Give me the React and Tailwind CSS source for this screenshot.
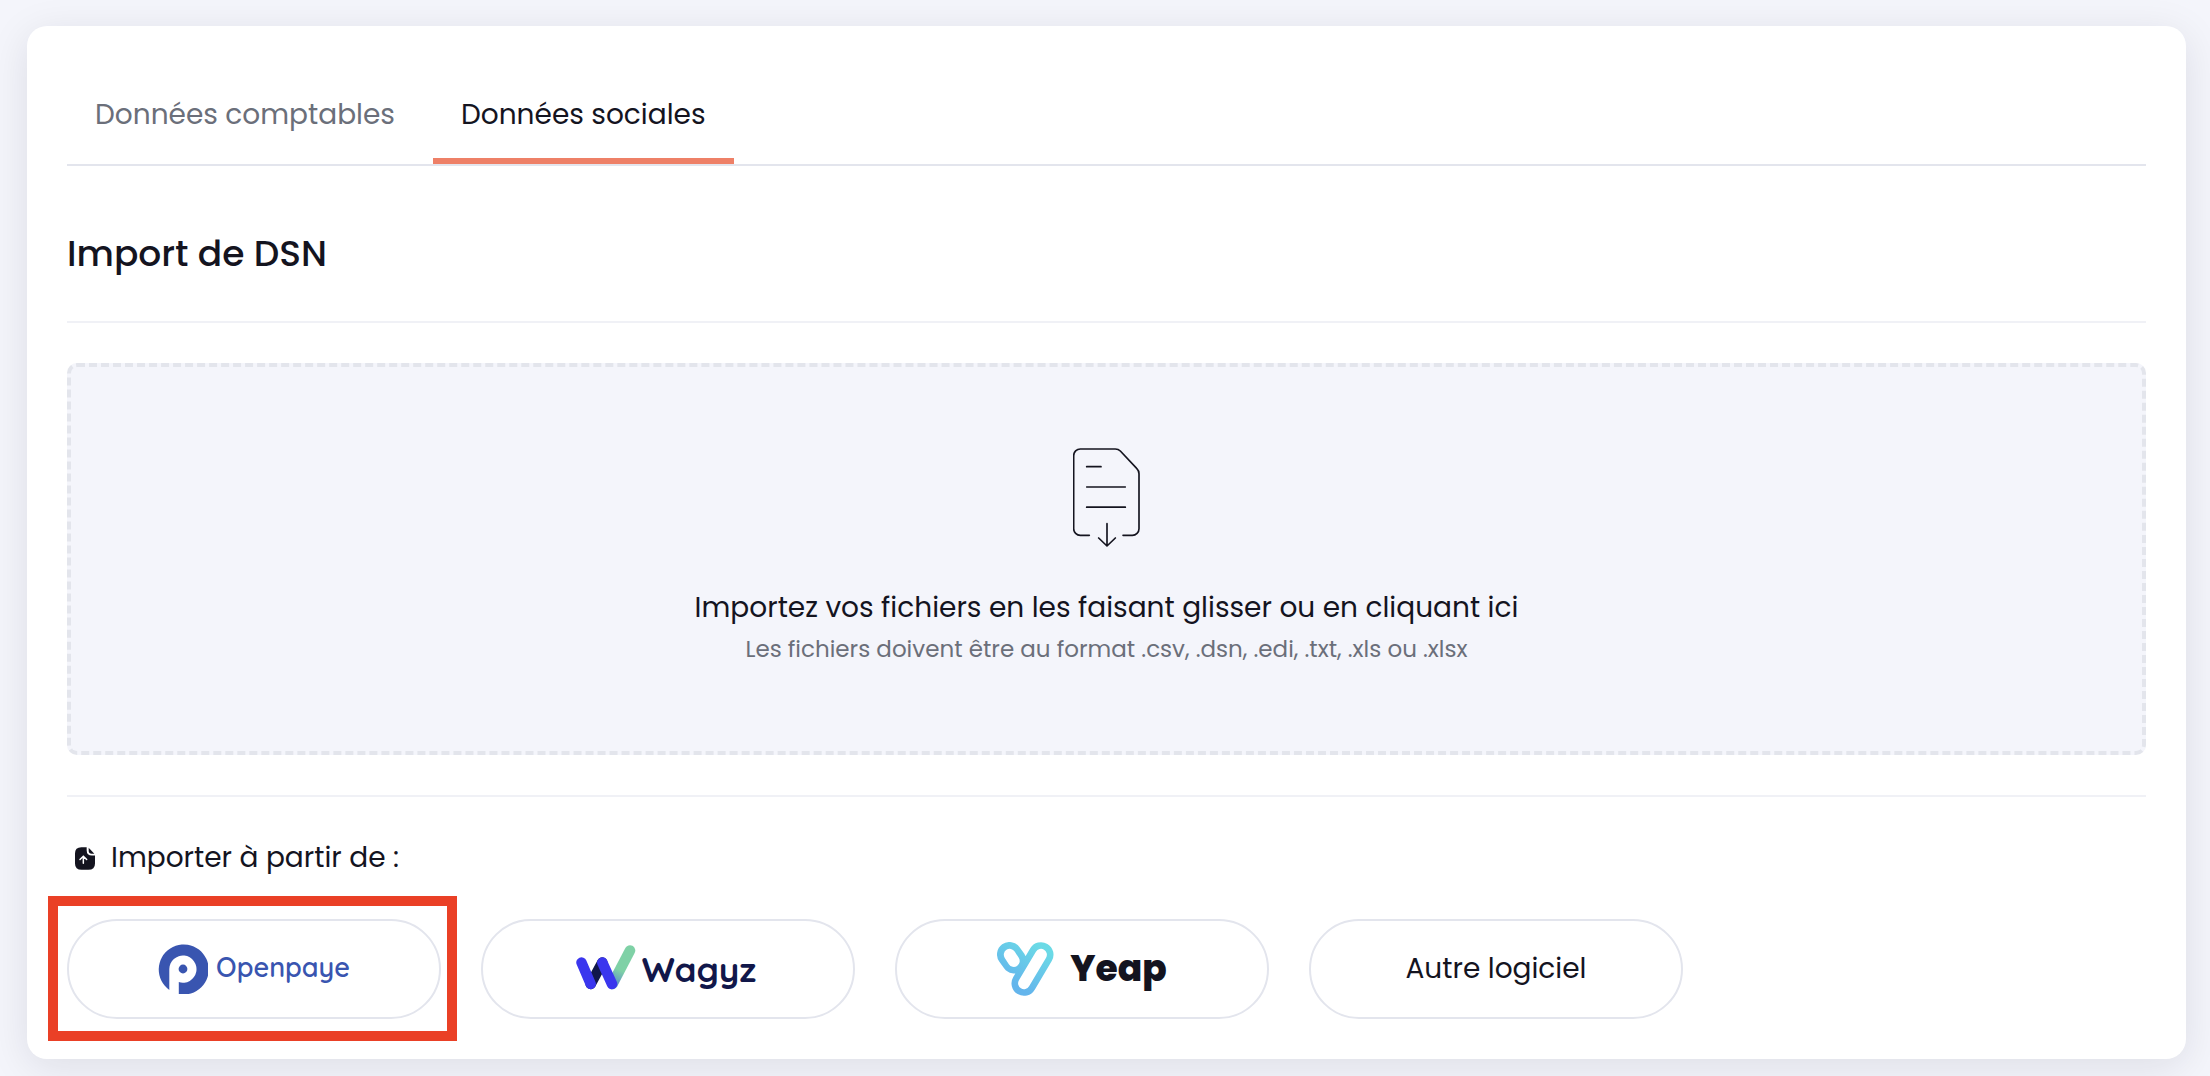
import { useState } from "react";

const TABS = ["Données comptables", "Données sociales"];

/* ================= ICONS ================= */
function DocumentIcon() {
  return (
    <svg
      viewBox="99 83 204 297"
      className="w-[68px] h-[99px]"
      fill="none"
      stroke="#14141f"
      strokeWidth="5"
      strokeLinecap="round"
      strokeLinejoin="round"
      aria-hidden="true"
    >
      <path d="M148 345H121a20 20 0 0 1-20-20V106a20 20 0 0 1 20-20H226q9 0 15 6l49 52q7 7 7 16V325a20 20 0 0 1-20 20H249" />
      <path d="M140 139h43M140 200h116M140 260.500h116" />
      <path d="M201 310v67M176 353l25 24 25-24" />
    </svg>
  );
}

function FileUploadIcon() {
  return (
    <svg viewBox="134 199 60 68" className="w-5 h-[23px]" aria-hidden="true">
      <path
        fill="#14141f"
        d="M153 199H169V208Q169 224 185 224H194V248Q194 267 174 267H154Q134 267 134 248V218Q134 199 153 199Z"
      />
      <path fill="#14141f" d="M175 201L192 219H184Q175 219 175 210Z" />
      <path
        fill="none"
        stroke="#fff"
        strokeWidth="4.5"
        strokeLinecap="round"
        strokeLinejoin="round"
        d="M159 247V227M149 236l10-10 10 10"
      />
    </svg>
  );
}

/* ================= LOGOS ================= */
function OpenpayeLogo() {
  return (
    <span className="flex items-center gap-2 text-[#3955b0]">
      <svg viewBox="0 0 50 50" className="w-[50px] h-[50px]" aria-hidden="true">
        <path
          fill="#3955b0"
          d="M11.300 45.900A25 25 0 1 1 20.800 50V38.100A13.600 13.600 0 1 0 11.300 25Z"
        />
        <circle cx="25" cy="25" r="4.400" fill="#3955b0" />
      </svg>
      <span className="pb-1 font-['Quicksand','Poppins',Inter,sans-serif] text-[27px] font-semibold">
        Openpaye
      </span>
    </span>
  );
}

function WagyzLogo() {
  return (
    <span className="flex items-center gap-1.5 pr-1 text-[#11174a]">
      <svg
        viewBox="0 0 60 48"
        className="w-[60px] h-12"
        fill="none"
        strokeWidth="10.500"
        strokeLinecap="round"
        aria-hidden="true"
      >
        <defs>
          <linearGradient id="wagyz" gradientUnits="userSpaceOnUse" x1="54" y1="5" x2="38" y2="39">
            <stop offset="0.600" stopColor="#7fd1a6" />
            <stop offset="1" stopColor="#5b8fc9" />
          </linearGradient>
        </defs>
        <path stroke="#11174a" d="M26.300 17.500L14.700 39" />
        <path stroke="url(#wagyz)" d="M54 5.500L36.500 39" />
        <path stroke="#3a36ee" d="M5.500 17.500L14.700 39M26.300 17.500L36 39" />
      </svg>
      <span className="font-['Quicksand','Poppins',Inter,sans-serif] text-[35px] font-bold">
        Wagyz
      </span>
    </span>
  );
}

function YeapLogo() {
  return (
    <span className="flex items-center gap-4 text-[#14141f]">
      <svg
        viewBox="0 0 57 54"
        className="w-[57px] h-[54px]"
        fill="none"
        strokeLinecap="round"
        aria-hidden="true"
      >
        <defs>
          <linearGradient id="yeap" gradientUnits="userSpaceOnUse" x1="44" y1="5" x2="20" y2="44">
            <stop offset="0" stopColor="#6bdae6" />
            <stop offset="1" stopColor="#64b5ec" />
          </linearGradient>
        </defs>
        <path
          stroke="url(#yeap)"
          strokeWidth="25"
          d="M12.500 12.500L17.200 19M44 12.700L27 41.300"
        />
        <path
          stroke="#fff"
          strokeWidth="11.800"
          d="M12.700 12.700L16.800 19M44 12.700L27 41.300"
        />
      </svg>
      <span className="text-4xl font-extrabold">Yeap</span>
    </span>
  );
}

const SOURCES = [
  { name: "Openpaye", logo: <OpenpayeLogo />, highlighted: true },
  { name: "Wagyz", logo: <WagyzLogo /> },
  { name: "Yeap", logo: <YeapLogo /> },
  { name: "Autre logiciel", logo: "Autre logiciel" },
];

function App() {
  const [activeTab, setActiveTab] = useState("Données sociales");

  return (
    <div className="min-h-screen bg-[#f4f5fb] pt-[26px] pr-6 pb-[17px] pl-[27px] font-['Poppins',Inter,sans-serif] text-[28px] leading-[42px] text-[#14141f]">
      <main className="rounded-[20px] bg-white p-10 shadow-[0_8px_40px_rgba(20,20,40,0.1)]">

        {/* ================= TABS ================= */}
        <div role="tablist" className="flex gap-2.5 border-b-2 border-[#e3e5ed]">
          {TABS.map((tab) => (
            <button
              key={tab}
              role="tab"
              aria-selected={activeTab === tab}
              onClick={() => setActiveTab(tab)}
              className={
                activeTab === tab
                  ? "border-b-6 border-[#ee8067] px-7 pt-7 pb-[22px]"
                  : "border-b-6 border-transparent px-7 pt-7 pb-[22px] text-[#6b6f7a]"
              }
            >
              {tab}
            </button>
          ))}
        </div>

        {/* ================= TITLE ================= */}
        <h1 className="border-b-2 border-[#f0f1f6] pt-16 pb-[43px] text-4xl leading-12 font-medium">
          Import de DSN
        </h1>

        {/* ================= DROP ZONE ================= */}
        <label className="mt-10 flex cursor-pointer flex-col items-center rounded-[10px] border-4 border-dashed border-[#e3e5ec] bg-[#f4f5fb] pt-[81px] pb-[86px]">
          <input
            type="file"
            multiple
            accept=".csv,.dsn,.edi,.txt,.xls,.xlsx"
            className="sr-only"
          />
          <DocumentIcon />
          <span className="mt-10">
            Importez vos fichiers en les faisant glisser ou en cliquant ici
          </span>
          <span className="mt-1 text-[23px] leading-8 text-[#6b6f7a]">
            Les fichiers doivent être au format .csv, .dsn, .edi, .txt, .xls ou .xlsx
          </span>
        </label>

        {/* ================= SOURCES ================= */}
        <section className="mt-10 border-t-2 border-[#f0f1f6] pt-10">
          <h2 className="flex items-center gap-4 pl-2">
            <FileUploadIcon />
            Importer à partir de :
          </h2>

          <div className="mt-10 flex flex-wrap gap-10">
            {SOURCES.map((source) => (
              <div key={source.name} className="relative">
                <button className="flex h-[100px] w-[374px] items-center justify-center rounded-full border-2 border-[#e3e5ed]">
                  {source.logo}
                </button>
                {source.highlighted && (
                  <div className="pointer-events-none absolute -top-[23px] -right-4 -bottom-[22px] -left-[19px] border-10 border-[#ea4026]" />
                )}
              </div>
            ))}
          </div>
        </section>
      </main>
    </div>
  );
}

export default App;
